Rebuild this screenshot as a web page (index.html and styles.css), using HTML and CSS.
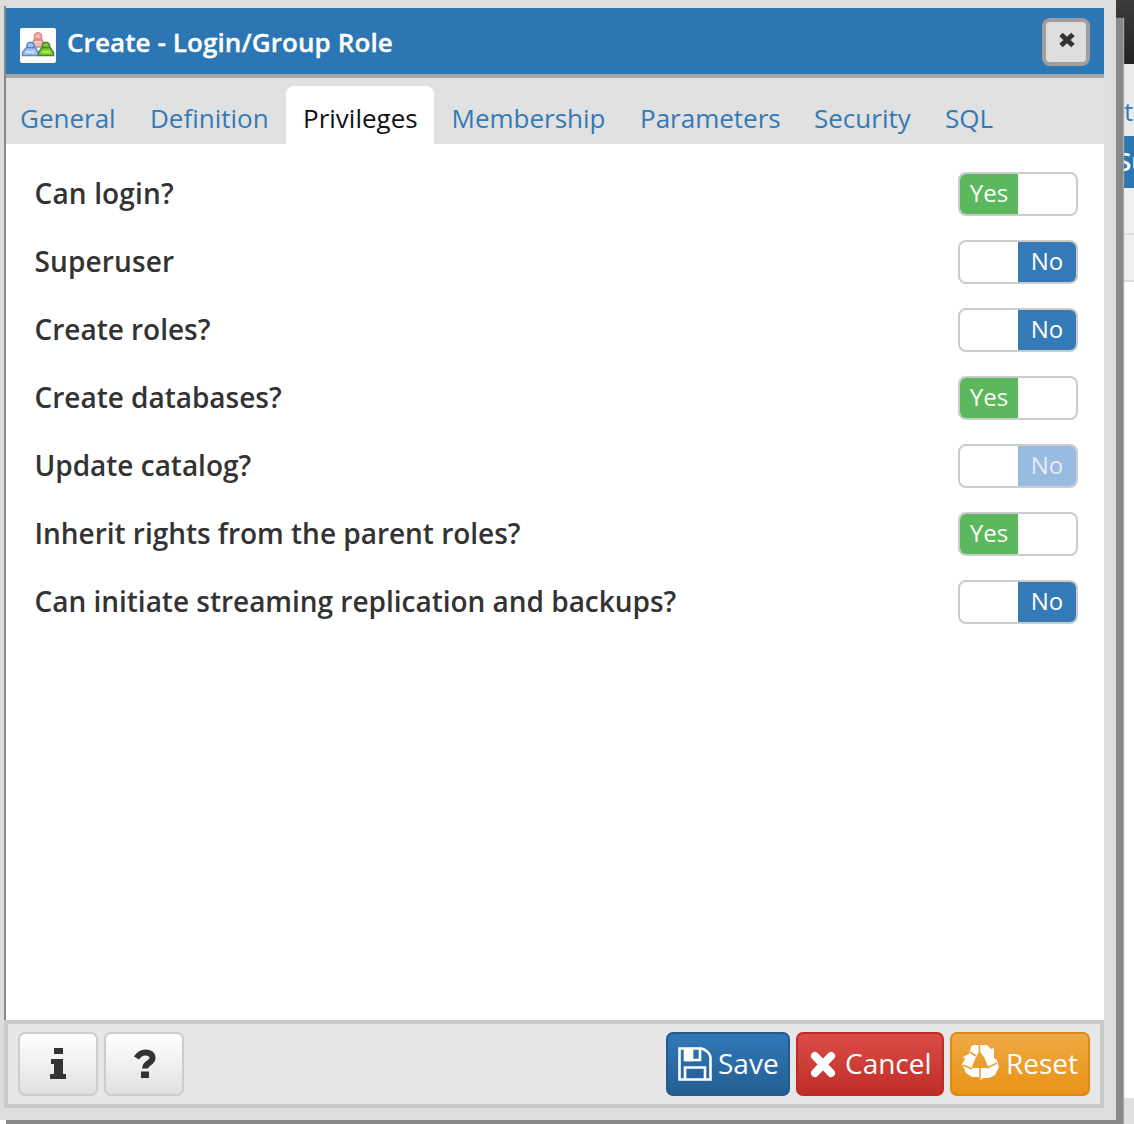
FILE: index.html
```html
<!DOCTYPE html>
<html lang="en">
<head>
<meta charset="utf-8">
<title>Create - Login/Group Role</title>
<link rel="stylesheet" href="styles.css">
</head>
<body>
<div class="workspace">
  <div class="topbar"></div>
  <div class="ws-tabs">t</div>
  <div class="ws-selected">Su</div>
  <div class="ws-row"></div>
  <div class="ws-row"></div>
  <div class="ws-content"></div>
  <div class="ws-foot"></div>
</div>
<div class="shadow"></div>
<div class="dialog">
  <div class="panel">
    <header class="titlebar">
      <svg class="logo" width="36" height="36" viewBox="0 0 36 36">
        <rect width="36" height="35" rx="2" fill="#fff"/>
        <g stroke-width="1.5">
          <g fill="#efb9b6" stroke="#d98580"><path d="M11 19l3-7h8l3 7z"/><path d="M14.500 11V7l2-2h3l2 2v4z"/><path d="M15 14h6" stroke="#f6d5d3"/></g>
          <g fill="#a6c5ee" stroke="#5b88ca"><path d="M2.500 27.500v-3l4-5h9l2.500 5v3z"/><path d="M7 19.500v-3l2-2h3l2 2v3z"/><path d="M6 24h8" stroke="#dceaff"/></g>
          <g fill="#83cf31" stroke="#43852a"><path d="M18.500 27.500v-3l3.500-5h8l3.500 5v3z"/><path d="M22.500 19.500v-3l2-2h3l2 2v3z"/><path d="M22 24h8" stroke="#b7f45e"/></g>
        </g>
      </svg>
      <h1>Create - Login/Group Role</h1>
      <button class="close" aria-label="Close"><svg width="18" height="16" viewBox="0 0 18 16"><path d="M3 2.500l12 11M15 2.500l-12 11" stroke="#333" stroke-width="5"/></svg></button>
    </header>
    <nav class="tabs">
      <a class="tab general">General</a>
      <a class="tab definition">Definition</a>
      <a class="tab privileges active">Privileges</a>
      <a class="tab membership">Membership</a>
      <a class="tab parameters">Parameters</a>
      <a class="tab security">Security</a>
      <a class="tab sql">SQL</a>
    </nav>
    <main class="fields">
      <div class="field"><span class="short">Can login?</span><div class="switch yes"><b>Yes</b></div></div>
      <div class="field"><span class="short">Superuser</span><div class="switch no"><b>No</b></div></div>
      <div class="field"><span>Create roles?</span><div class="switch no"><b>No</b></div></div>
      <div class="field"><span>Create databases?</span><div class="switch yes"><b>Yes</b></div></div>
      <div class="field"><span>Update catalog?</span><div class="switch no disabled"><b>No</b></div></div>
      <div class="field"><span>Inherit rights from the parent roles?</span><div class="switch yes"><b>Yes</b></div></div>
      <div class="field"><span>Can initiate streaming replication and backups?</span><div class="switch no"><b>No</b></div></div>
    </main>
  </div>
  <footer class="footer">
    <button class="btn light" aria-label="Information"><svg width="16" height="32" viewBox="0 0 16 32"><path d="M4 0h9v6H4zM1 11h12v15h3v5H0v-5h4V16H1z" fill="#333"/></svg></button>
    <button class="btn light help" aria-label="Help"><svg width="22" height="30" viewBox="0 0 22 30"><path d="M2.500 9C5 5 8 3.500 11.500 3.500c4.500 0 7 2 7 5.500 0 5-7.500 5-7.500 10.500" fill="none" stroke="#333" stroke-width="6"/><path d="M7 22.500h8V29H7z" fill="#333"/></svg></button>
    <span class="grow"></span>
    <button class="btn save"><svg width="34" height="34" viewBox="0 0 34 34" fill="none" stroke="#fff" stroke-width="2.600"><path d="M1.500 1.500h22c4 1 9 5 9 9v22h-31z"/><path d="M7 32V20.500h20V32"/><path d="M7 2v11h15V2"/><path d="M8 2h6v11H8z" fill="#fff"/></svg><span>Save</span></button>
    <button class="btn cancel"><svg width="26" height="28" viewBox="0 0 26 28"><path d="M5 6l16 17M21 6L5 23" stroke="#fff" stroke-width="8" stroke-linecap="round"/></svg><span>Cancel</span></button>
    <button class="btn reset"><svg width="38" height="36" viewBox="0 0 38 36"><path fill="#fff" fill-rule="evenodd" d="M12 1h14l4 4 3-1v10l3 2 2 7-4 8-6 3h-6l-2 2-3-3H11l-6-4-4-9 3-5-2-2 6-3 2-7zM18.500 7l-4 7-4 10h17l-4-10z"/><path d="M18.500 9V1M9 8l6 4M2 21l9 4M26 24l10-5M19 23v12" fill="none" stroke="#eba033" stroke-width="1.600"/></svg><span>Reset</span></button>
  </footer>
</div>
</body>
</html>
```
FILE: styles.css
```css
* { box-sizing: border-box; }
body { margin: 0; width: 1134px; height: 1124px; overflow: hidden; position: relative; background: #fff; font-family: "Open Sans", sans-serif; font-size: 26px; }
button { font: inherit; padding: 0; margin: 0; }
svg { display: block; flex: none; }
.workspace { height: 1124px; padding-left: 1110px; display: flex; flex-direction: column; overflow: hidden; }
.topbar { height: 64px; background: linear-gradient(#3c3c3c, #222); }
.ws-tabs { height: 72px; background: #eaeaea; color: #337ab7; padding: 29px 0 0 14px; line-height: 36px; }
.ws-selected { height: 52px; background: #2c76b4; color: #fff; padding-left: 7px; line-height: 50px; font-weight: 600; }
.ws-row { height: 47px; background: #f0f0f0; border-bottom: 2px solid #ddd; }
.ws-content { flex: 1; background: #fff; }
.ws-foot { height: 26px; background: #e0e0e0; }
.shadow { position: absolute; left: 6px; top: 18px; width: 1117px; height: 1106px; background: #888; box-shadow: 1px 0 1px #aaa; }
.dialog { position: absolute; left: 0; top: 0; width: 1116px; height: 1120px; background: #ddd; padding: 6px 12px 12px 4px; display: flex; flex-direction: column; }
.panel { height: 1014px; border-left: 2px solid #888; padding-top: 2px; display: flex; flex-direction: column; }
.titlebar { height: 70px; background: #2c76b4; border-bottom: 4px solid #a8a8a8; padding: 0 14px; display: flex; align-items: center; }
.logo { margin-top: 9px; }
h1 { margin: 2px 0 0 11px; flex: 1; color: #fff; font-size: 26px; font-weight: 600; line-height: 36px; white-space: nowrap; letter-spacing: .1px; -webkit-text-stroke: .35px; }
.close { width: 48px; height: 48px; margin-top: 2px; border: 4px solid #9f9f9f; border-radius: 8px; background: #dedede; display: flex; justify-content: center; padding: 10px 0 0 2px; }
.tabs { height: 66px; padding-top: 8px; background: #e1e1e1; display: flex; }
.tab { color: #337ab7; height: 58px; line-height: 65px; white-space: nowrap; padding-left: 17px; }
.general { width: 129px; padding-left: 14px; }
.definition { width: 151px; padding-left: 15px; }
.privileges { width: 148px; }
.membership { width: 188px; padding-left: 17.5px; }
.parameters { width: 175px; padding-left: 18px; }
.security { width: 131px; }
.active { color: #111; background: #fff; border-radius: 8px 8px 0 0; }
.fields { flex: 1; background: #fff; padding: 28px 26px 0 28.5px; display: flex; flex-direction: column; gap: 24px; }
.field { height: 44px; display: flex; justify-content: space-between; align-items: center; color: #333; font-size: 28px; font-weight: 600; line-height: 40px; white-space: nowrap; }
.field > span { height: 43px; letter-spacing: -.02px; }
.field > .short { letter-spacing: .15px; }
.switch { width: 120px; height: 44px; border: 2px solid #ccc; border-radius: 8px; overflow: hidden; display: flex; background: #fff; }
.switch b { width: 58px; color: #fff; font-size: 24px; font-weight: 400; line-height: 38px; text-align: center; }
.yes b { background: #5cb85c; }
.no { justify-content: flex-end; }
.no b { background: #337ab7; }
.disabled b { background: #99bbdf; color: #e3edf8; }
.footer { height: 88px; border: 4px solid #cacaca; background: #e7e7e7; padding: 8px 10px; display: flex; gap: 6px; }
.grow { flex: 1; }
.btn { height: 64px; border: 2px solid; border-radius: 7px; color: #fff; font-size: 28px; display: flex; align-items: center; white-space: nowrap; }
.btn span { line-height: 58px; height: 60px; }
.light { width: 80px; border-color: #ccc; background: linear-gradient(#fff, #e0e0e0); justify-content: center; }
.help { padding-left: 2px; }
.save { width: 124px; padding-left: 10px; gap: 6px; border-color: #225c8d; background: linear-gradient(#3079b8, #245e92); }
.cancel { width: 148px; padding-left: 12px; gap: 9px; border-color: #bd2b28; background: linear-gradient(#dc4c47, #bf2d29); }
.reset { width: 140px; padding-left: 9px; gap: 7px; border-color: #d98a18; background: linear-gradient(#eda944, #ea9316); }
.reset svg { margin-top: -4px; }
```
